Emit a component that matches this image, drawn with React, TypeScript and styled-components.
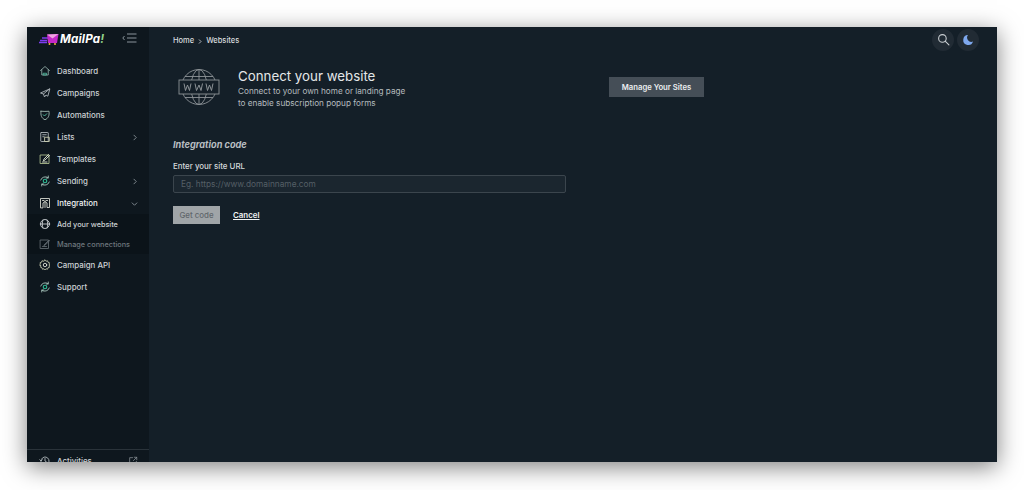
import React from 'react';
import styled, { createGlobalStyle } from 'styled-components';

const Global = createGlobalStyle`
  html, body { margin: 0; padding: 0; background: #fff; }
  body { font-family: Inter, "Open Sans", "Liberation Sans", sans-serif; }
  * { box-sizing: border-box; }
`;

const Page = styled.div`
  width: 1024px;
  height: 490px;
  padding: 27px 27px 28px;
  background: #fff;
  overflow: hidden;
`;

const Frame = styled.div`
  display: flex;
  height: 435px;
  background: #141f28;
  box-shadow: 0 5px 22px rgba(0, 0, 0, 0.5);
  overflow: hidden;
`;

const Sidebar = styled.aside`
  display: flex;
  flex-direction: column;
  flex: 0 0 122px;
  background: #0e171e;
`;

const Brand = styled.div`
  display: flex;
  align-items: center;
  height: 24px;
  margin-bottom: 9px;
  padding-left: 12px;
  padding-right: 12px;
`;

const LogoText = styled.span`
  margin-left: 1px;
  color: #fff;
  font-size: 11.6px;
  font-weight: 700;
  font-style: italic;
  letter-spacing: 0.2px;

  b { color: #8fd18a; font-weight: 700; }
`;

const Toggle = styled.span`
  display: flex;
  margin-left: auto;
  margin-top: -2px;
  color: #9aa3aa;
`;

const Menu = styled.nav`
  display: flex;
  flex-direction: column;
`;

const Row = styled.div<{ $active?: boolean }>`
  display: flex;
  align-items: center;
  height: 22px;
  padding: 0 11px 0 12px;
  gap: 6px;
  color: ${p => (p.$active ? '#f2f4f5' : '#ccd1d4')};
  font-size: 7.9px;
  font-weight: 500;
  white-space: nowrap;
`;

const Chevron = styled.span`
  display: flex;
  margin-left: auto;
  color: #8b949a;
`;

const SubMenu = styled.div`
  display: flex;
  flex-direction: column;
  background: #0b1319;
`;

const SubRow = styled(Row)<{ $dim?: boolean }>`
  height: 20px;
  font-size: 7.3px;
  color: ${p => (p.$dim ? '#6d767c' : '#ccd1d4')};
`;

const Footer = styled(Row)`
  flex: 0 0 auto;
  height: 22px;
  margin-top: auto;
  margin-bottom: -9px;
  border-top: 1px solid #2a333a;
`;

const Main = styled.main`
  display: flex;
  flex-direction: column;
  flex: 1;
  padding-left: 24px;
  min-width: 0;
`;

const TopBar = styled.header`
  display: flex;
  align-items: center;
  height: 26px;
  padding-right: 18px;
`;

const Crumbs = styled.div`
  display: flex;
  align-items: center;
  gap: 3px;
  color: #d8dcdf;
  font-size: 7.5px;
  font-weight: 500;
`;

const Actions = styled.div`
  display: flex;
  gap: 3px;
  margin-left: auto;
  margin-top: -1px;
`;

const RoundButton = styled.span`
  display: flex;
  align-items: center;
  justify-content: center;
  width: 22px;
  height: 22px;
  border-radius: 50%;
  background: #212b34;
  color: #c9ced2;
`;

const Hero = styled.section`
  display: flex;
  align-items: center;
  height: 60px;
  margin-top: 4px;
`;

const HeroLeft = styled.div`
  display: flex;
  align-items: center;
  flex: 0 0 436px;
  padding-left: 5px;
  gap: 18px;
`;

const HeroText = styled.div`
  display: flex;
  flex-direction: column;
  margin-top: 2px;
`;

const Title = styled.h1`
  margin: 0;
  color: #e4e7e9;
  font-size: 13.3px;
  line-height: 17px;
  font-weight: 400;
`;

const Lead = styled.p`
  margin: 0;
  color: #b5bbbf;
  font-size: 8.2px;
  line-height: 12px;
`;

const SolidButton = styled.button`
  width: 95px;
  height: 20px;
  padding: 0;
  border: 0;
  background: #454e57;
  color: #eceef0;
  font: 600 7.7px Inter, sans-serif;
`;

const Form = styled.form`
  display: flex;
  flex-direction: column;
  margin-top: 22px;
`;

const SectionTitle = styled.h2`
  margin: 0 0 10px;
  color: #b9bec2;
  font-size: 9.2px;
  line-height: 12px;
  font-weight: 700;
  font-style: italic;
`;

const Label = styled.label`
  margin-bottom: 4px;
  color: #d5d9db;
  font-size: 7.9px;
  line-height: 10px;
  font-weight: 500;
`;

const Input = styled.input`
  width: 393px;
  height: 18px;
  padding: 0 7px;
  border: 1px solid #3b454d;
  border-radius: 2px;
  background: #1b262f;
  color: #ddd;
  font: 400 8.3px Inter, sans-serif;

  &::placeholder { color: #555f66; opacity: 1; }
`;

const FormActions = styled.div`
  display: flex;
  align-items: center;
  gap: 13px;
  margin-top: 13px;
`;

const GetCode = styled.button`
  width: 47px;
  height: 18px;
  padding: 0;
  border: 0;
  background: #a0a5a8;
  color: #60676c;
  font: 500 7.9px Inter, sans-serif;
`;

const CancelLink = styled.a`
  color: #f0f2f3;
  font-size: 7.9px;
  font-weight: 600;
  text-decoration: underline;
`;

const Icon: React.FC<{ children: React.ReactNode; size?: number; color?: string }> = ({ children, size = 12, color = '#aeb6ba' }) => (
  <svg width={size} height={size} viewBox="0 0 24 24" fill="none" stroke={color} strokeWidth="1.8" strokeLinecap="round" strokeLinejoin="round" style={{ flex: 'none' }}>
    {children}
  </svg>
);

const Logo = () => (
  <svg width="20" height="12" viewBox="0 0 20 12" style={{ flex: 'none' }}>
    <path d="M1 7.5h7M3 5h6M0 9.500h8" stroke="#7d3cf0" strokeWidth="1.3" />
    <path d="M8 1.500 19.500 1 18 10H9z" fill="#c428c8" />
    <path d="M8 1.500 13.500 5.500l6-4.500z" fill="#f0a2e0" />
    <circle cx="10.500" cy="11" r="1" fill="#f2b23e" />
    <circle cx="16" cy="11" r="1" fill="#f2b23e" />
  </svg>
);

const WebGlobe = () => (
  <svg width="42" height="38" viewBox="0 0 42 38" fill="none" stroke="#8c9296" strokeWidth="0.9" style={{ flex: 'none' }}>
    <circle cx="21" cy="19" r="17.5" />
    <ellipse cx="21" cy="19" rx="8" ry="17.5" />
    <path d="M21 1.500V12M21 26v10.500M7 8.500h28M7 29.500h28" />
    <rect x="1" y="12" width="40" height="14" fill="#141f28" />
    <path d="M6 15.500l1.500 7 2-5.500 2 5.500 1.500-7M17 15.500l1.500 7 2.500-5.500 2 5.500 1.500-7M28 15.500l1.500 7 2-5.500 2 5.500 1.500-7" strokeWidth="1" />
  </svg>
);

const icons = {
  home: <Icon color="#8aa5a0"><path d="M3 11 12 3l9 8M5.500 9v11h13V9" /><path d="M9 16.500h6v3.500H9z" stroke="#4fb59b" /></Icon>,
  send: <Icon><path d="M21 4 3 12l6 2 2 6 3-4 3 2zM9 14 21 4" /></Icon>,
  shield: <Icon color="#9fb7b0"><path d="M4 4.500c5 .5 11 .5 16 0 1 8-1 14-8 17C5 18.500 3 12.500 4 4.500z" /><path d="m8.500 11.500 2.500 2.500 4.500-4.500" stroke="#4fc2a2" /></Icon>,
  list: <Icon><rect x="3.500" y="3" width="15" height="18" rx="1" /><path d="M7.500 7.500h7M7.500 11.500h3" /><rect x="12" y="12.500" width="8.500" height="8.500" stroke="#c8cdb0" /></Icon>,
  template: <Icon color="#a9b98a"><rect x="3" y="4" width="17" height="17" /><path d="m9 15 1-3 9-9 2 2-9 9zM7 18h9" stroke="#dfe6d0" /></Icon>,
  sending: <Icon color="#a6c4bb"><path d="M3.500 10A9 9 0 0 1 18 5.500M20.500 14A9 9 0 0 1 6 18.500M18.500 2v4h-4M5.500 22v-4h4" /><circle cx="12" cy="12" r="3.500" stroke="#2fb591" strokeWidth="2.400" /></Icon>,
  integration: <Icon color="#d6d9cf"><path d="M3 21V3h18v18h-5v-9l-4-3-4 3v9zM7 7h3M14 7h3" /><path d="M12 9v12" /></Icon>,
  globe: <Icon color="#c8cdd0"><circle cx="12" cy="12" r="9" /><path d="M2.500 12h19M8 4c-2 5-2 11 0 16M16 4c2 5 2 11 0 16" /></Icon>,
  manage: <Icon color="#5f686e"><rect x="3" y="4" width="16" height="17" /><path d="m10 14 10-10 1 2-10 9zM7 17h8" /></Icon>,
  gear: <Icon color="#b9bea4"><path d="M12 2l2 2.500 3-1 1 3 3 1-1 3 2 1.500-2 1.500 1 3-3 1-1 3-3-1-2 2.500-2-2.500-3 1-1-3-3-1 1-3L1 12l2-1.500-1-3 3-1 1-3 3 1z" /><circle cx="12" cy="12" r="3.500" stroke="#dfe3d8" /></Icon>,
  history: <Icon><path d="M4 12a8 8 0 1 1 2.500 5.800M4 12 1.500 9.500M4 12l2.500-2.500M12 7v5l3 2" /></Icon>,
  external: <Icon size={10} color="#8a9297"><path d="M11 4H4v16h16v-7M13 11l8-8M15 3h6v6" /></Icon>,
};

const ChevronRight = () => <Chevron><svg width="7" height="7" viewBox="0 0 8 8" fill="none" stroke="currentColor" strokeWidth="1"><path d="m3 1 3 3-3 3" /></svg></Chevron>;
const ChevronDown = () => <Chevron><svg width="7" height="7" viewBox="0 0 8 8" fill="none" stroke="currentColor" strokeWidth="1"><path d="m1 3 3 3 3-3" /></svg></Chevron>;

export default function App() {
  return (
    <>
      <Global />
      <Page>
        <Frame>
          <Sidebar>
            <Brand>
              <Logo />
              <LogoText>MailPa<b>!</b></LogoText>
              <Toggle>
                <svg width="15" height="10" viewBox="0 0 15 10" fill="none" stroke="currentColor" strokeWidth="0.9">
                  <path d="M2.500 3 .8 5l1.700 2M5 1h9.500M5 5h9.500M5 9h9.500" />
                </svg>
              </Toggle>
            </Brand>
            <Menu>
              <Row>{icons.home}Dashboard</Row>
              <Row>{icons.send}Campaigns</Row>
              <Row>{icons.shield}Automations</Row>
              <Row>{icons.list}Lists<ChevronRight /></Row>
              <Row>{icons.template}Templates</Row>
              <Row>{icons.sending}Sending<ChevronRight /></Row>
              <Row $active>{icons.integration}Integration<ChevronDown /></Row>
              <SubMenu>
                <SubRow>{icons.globe}Add your website</SubRow>
                <SubRow $dim>{icons.manage}Manage connections</SubRow>
              </SubMenu>
              <Row>{icons.gear}Campaign API</Row>
              <Row>{icons.sending}Support</Row>
            </Menu>
            <Footer>{icons.history}Activities<Chevron>{icons.external}</Chevron></Footer>
          </Sidebar>
          <Main>
            <TopBar>
              <Crumbs>
                <span>Home</span>
                <svg width="6" height="8" viewBox="0 0 6 8" fill="none" stroke="currentColor" strokeWidth="0.8"><path d="m2 3.500 2 2-2 2" /></svg>
                <span>Websites</span>
              </Crumbs>
              <Actions>
                <RoundButton>
                  <svg width="13" height="13" viewBox="0 0 24 24" fill="none" stroke="currentColor" strokeWidth="2" strokeLinecap="round"><circle cx="10" cy="10" r="7" /><path d="m15 15 7 7" /></svg>
                </RoundButton>
                <RoundButton>
                  <svg width="12" height="12" viewBox="0 0 24 24" fill="#7ea8ee"><path d="M12 2a10 10 0 1 0 10 13 8.500 8.500 0 0 1-10-13z" /></svg>
                </RoundButton>
              </Actions>
            </TopBar>
            <Hero>
              <HeroLeft>
                <WebGlobe />
                <HeroText>
                  <Title>Connect your website</Title>
                  <Lead>Connect to your own home or landing page<br />to enable subscription popup forms</Lead>
                </HeroText>
              </HeroLeft>
              <SolidButton type="button">Manage Your Sites</SolidButton>
            </Hero>
            <Form>
              <SectionTitle>Integration code</SectionTitle>
              <Label>Enter your site URL</Label>
              <Input placeholder="Eg. https://www.domainname.com" />
              <FormActions>
                <GetCode type="button">Get code</GetCode>
                <CancelLink>Cancel</CancelLink>
              </FormActions>
            </Form>
          </Main>
        </Frame>
      </Page>
    </>
  );
}
